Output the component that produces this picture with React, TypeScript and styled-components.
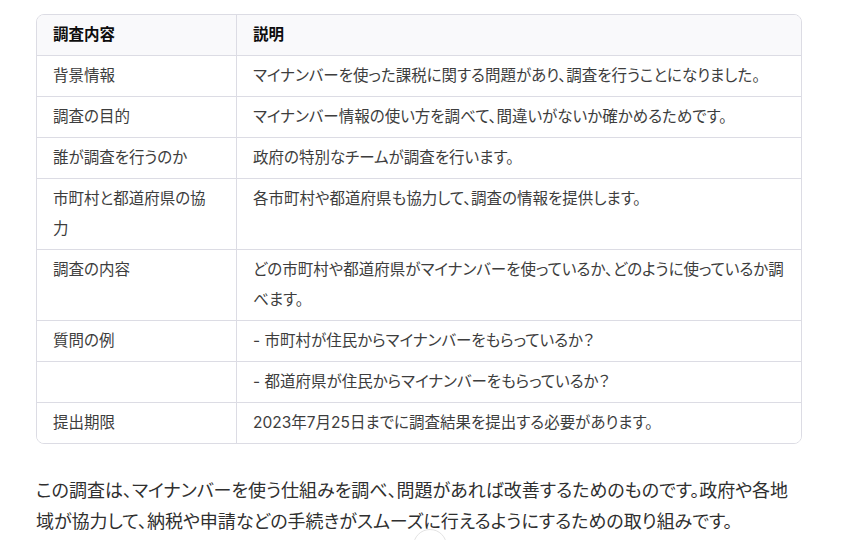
import styled, { createGlobalStyle } from "styled-components";

const GlobalStyle = createGlobalStyle`
  html, body {
    margin: 0;
    padding: 0;
    background: #ffffff;
  }
  body {
    font-family: "Inter", "Noto Sans CJK JP", sans-serif;
    font-feature-settings: "palt";
  }
`;

const Page = styled.div`
  width: 852px;
  height: 540px;
  padding: 14px 0 0 36px;
  box-sizing: border-box;
  overflow: hidden;
  position: relative;
`;

const TableWrap = styled.div`
  width: 766px;
  box-sizing: border-box;
  border: 1px solid #dcdce4;
  border-radius: 8px;
  overflow: hidden;
`;

const Table = styled.table`
  width: 100%;
  border-collapse: separate;
  border-spacing: 0;
  table-layout: fixed;
`;

const Cell = styled.td<{ $head?: boolean; $first?: boolean; $last?: boolean }>`
  box-sizing: border-box;
  padding: ${(p) => (p.$first ? "5px 20px 5px 16px" : "5px 16px")};
  font-size: 15.5px;
  line-height: 30px;
  vertical-align: top;
  text-align: left;
  color: ${(p) => (p.$head ? "#0d0d0d" : "#3d3d3d")};
  font-weight: ${(p) => (p.$head ? 700 : 400)};
  background: ${(p) => (p.$head ? "#f9f9fb" : "#ffffff")};
  border-bottom: ${(p) => (p.$last ? "none" : "1px solid #dcdce4")};
  border-right: ${(p) => (p.$first ? "1px solid #dcdce4" : "none")};
  width: ${(p) => (p.$first ? "200px" : "auto")};
`;

const Paragraph = styled.p`
  margin: 31px 0 0;
  width: 766px;
  font-size: 18px;
  line-height: 31px;
  color: #2f2f2f;
`;

const ScrollButton = styled.button`
  position: absolute;
  left: 413px;
  top: 529px;
  width: 34px;
  height: 34px;
  border-radius: 50%;
  border: 1px solid #e3e3e3;
  background: #ffffff;
  padding: 0;
  display: flex;
  align-items: flex-start;
  justify-content: center;
`;

const rows: [string, string][] = [
  ["背景情報", "マイナンバーを使った課税に関する問題があり、調査を行うことになりました。"],
  ["調査の目的", "マイナンバー情報の使い方を調べて、間違いがないか確かめるためです。"],
  ["誰が調査を行うのか", "政府の特別なチームが調査を行います。"],
  ["市町村と都道府県の協力", "各市町村や都道府県も協力して、調査の情報を提供します。"],
  ["調査の内容", "どの市町村や都道府県がマイナンバーを使っているか、どのように使っているか調べます。"],
  ["質問の例", "- 市町村が住民からマイナンバーをもらっているか？"],
  ["", "- 都道府県が住民からマイナンバーをもらっているか？"],
  ["提出期限", "2023年7月25日までに調査結果を提出する必要があります。"],
];

export default function App() {
  return (
    <Page>
      <GlobalStyle />
      <TableWrap>
        <Table>
          <thead>
            <tr>
              <Cell as="th" $head $first>調査内容</Cell>
              <Cell as="th" $head>説明</Cell>
            </tr>
          </thead>
          <tbody>
            {rows.map(([k, v], i) => (
              <tr key={i}>
                <Cell $first $last={i === rows.length - 1}>{k}</Cell>
                <Cell $last={i === rows.length - 1}>{v}</Cell>
              </tr>
            ))}
          </tbody>
        </Table>
      </TableWrap>
      <Paragraph>
        この調査は、マイナンバーを使う仕組みを調べ、問題があれば改善するためのものです。政府や各地域が協力して、納税や申請などの手続きがスムーズに行えるようにするための取り組みです。
      </Paragraph>
      <ScrollButton aria-label="scroll down">
        <svg width="18" height="18" viewBox="0 0 24 24" style={{ marginTop: 7 }}>
          <path d="M12 5v14M6 13l6 6 6-6" fill="none" stroke="#0d0d0d" strokeWidth="2" strokeLinecap="round" strokeLinejoin="round" />
        </svg>
      </ScrollButton>
    </Page>
  );
}
